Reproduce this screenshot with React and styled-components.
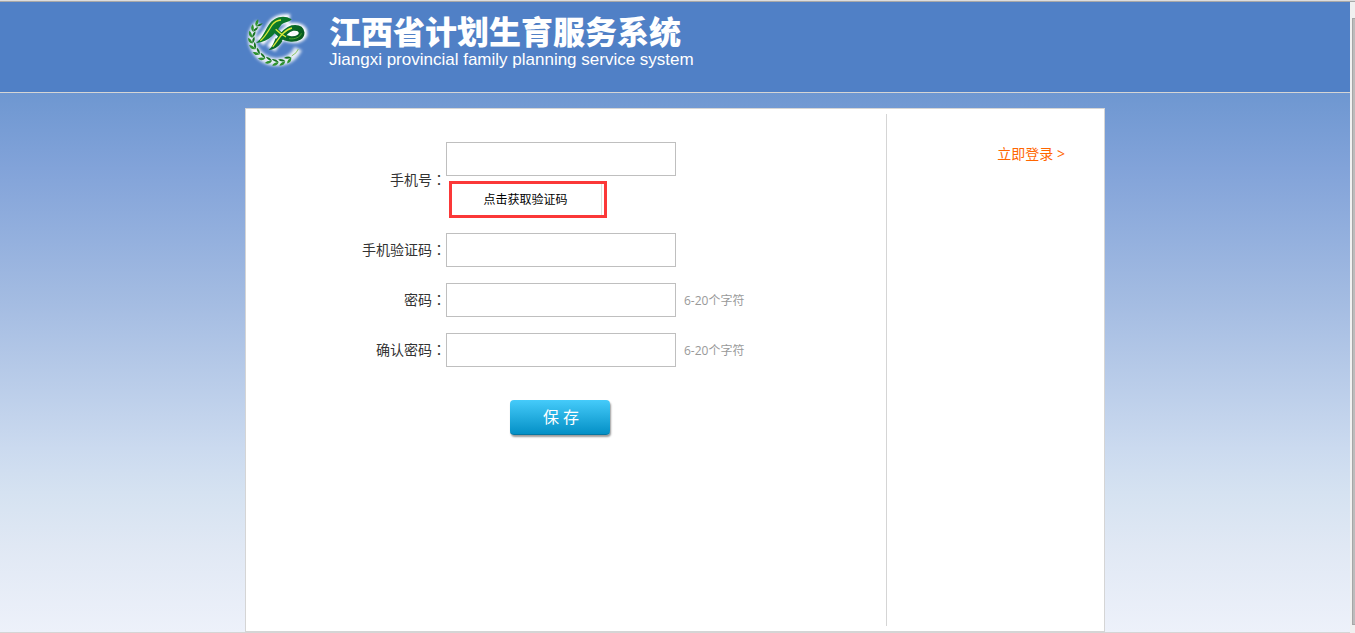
import React, { useState } from 'react';
import styled, { createGlobalStyle } from 'styled-components';

const GlobalStyle = createGlobalStyle`
  body {
    margin: 0;
    font-family: 'Open Sans', 'Noto Sans CJK SC', sans-serif;
    font-size: 14px;
    color: #333;
  }
  * {
    box-sizing: border-box;
  }
`;

const Window = styled.div`
  display: flex;
  min-height: 100vh;
  border-top: 1px solid #dcdcdc;
  background: #f0f0f0;
`;

const Page = styled.div`
  flex: 1;
  display: flex;
  flex-direction: column;
  border-top: 1px solid #a8a8a8;
  border-bottom: 1px solid #d5d5d5;
`;

const ScrollTrack = styled.div`
  width: 5px;
  padding: 16px 0 8px 2px;
  border-top: 1px solid #a8a8a8;
`;

const ScrollThumb = styled.div`
  height: 100%;
  background: #bcbcbc;
  border: 1px solid #a6a6a6;
  border-right: none;
`;

const Header = styled.header`
  height: 91px;
  background: #5080c6;
  border-bottom: 1px solid #d5d5d5;
`;

const Brand = styled.div`
  display: flex;
  max-width: 860px;
  margin: 0 auto;
  padding-top: 8px;
`;

const LogoSvg = styled.svg`
  width: 66px;
  height: 60px;
  margin-right: 18px;
  overflow: visible;
`;

const Title = styled.h1`
  margin: 0;
  font-family: 'Noto Sans CJK SC', sans-serif;
  font-size: 32px;
  line-height: 40px;
  font-weight: 900;
  color: #fff;
`;

const Subtitle = styled.p`
  margin: 0;
  font-family: 'Liberation Sans', sans-serif;
  font-size: 17px;
  line-height: 20px;
  color: #fff;
`;

const Content = styled.main`
  flex: 1;
  display: flex;
  justify-content: center;
  padding-top: 15px;
  background: linear-gradient(
    #6e97d1 0%,
    #82a3d9 14%,
    #a4bce2 39%,
    #cbdaef 66%,
    #d5e2f1 74%,
    #e0e8f4 84%,
    #edf1fa 100%
  );
`;

const Card = styled.div`
  display: flex;
  width: 100%;
  max-width: 860px;
  padding: 5px 0;
  background: #fff;
  border: 1px solid #d5d5d5;
`;

const Form = styled.form`
  flex: 1;
  padding-top: 28px;
`;

const Aside = styled.aside`
  width: 218px;
  padding: 30px 39px;
  border-left: 1px solid #d5d5d5;
  text-align: right;
`;

const LoginLink = styled.a`
  line-height: 20px;
  color: #ff6600;
  text-decoration: none;
`;

const Row = styled.div`
  display: flex;
  align-items: center;
  margin-bottom: ${(props) => props.$gap}px;
`;

const Label = styled.label`
  width: 200px;
  padding-bottom: 2px;
  text-align: right;
`;

// the TC face keeps the full-width colon in the middle of its box
const Colon = styled.span`
  font-family: 'Noto Sans CJK TC', sans-serif;
`;

const Input = styled.input`
  display: block;
  width: 230px;
  height: 34px;
  padding: 0 8px;
  border: 1px solid #bfbfbf;
  background: #fff;
  font-size: 14px;
`;

const Hint = styled.span`
  margin-left: 8px;
  font-size: 12px;
  color: #999;
`;

const CodeFrame = styled.div`
  width: 158px;
  height: 37px;
  margin: 5px 0 0 3px;
  border: 3px solid #fb3838;
`;

const CodeButton = styled.button`
  width: 150px;
  height: 31px;
  padding: 0 2px 2px 0;
  background: #fff;
  border: none;
  border-right: 1px solid #dde3dc;
  font-family: inherit;
  font-size: 12px;
  color: #000;
`;

const SaveButton = styled.button`
  display: block;
  width: 100px;
  height: 35px;
  margin: 33px 0 0 264px;
  padding: 0 0 2px 2px;
  border: none;
  border-bottom: 1px solid #0577a3;
  border-radius: 4px;
  background: linear-gradient(#45cbfa, #0490c6);
  box-shadow: 1px 2px 2px rgba(0, 0, 0, 0.4);
  font-family: inherit;
  font-size: 16px;
  color: #fff;
`;

// x, y and direction (degrees) of each leaf pair in the wreath
const leaves = [
  [70, 72, -48],
  [58, 86, -65],
  [52, 103, -85],
  [51, 121, -100],
  [56, 139, -120],
  [67, 156, -138],
  [82, 171, -155],
  [101, 181, -170],
  [121, 186, 178],
  [141, 185, 168],
  [160, 177, 150],
];

function Logo() {
  return (
    <LogoSvg viewBox="30 30 198 180" aria-hidden="true">
      <defs>
        <filter id="glow" x="-20%" y="-20%" width="140%" height="140%">
          <feGaussianBlur stdDeviation="5" />
        </filter>
        <linearGradient id="ribbon" gradientUnits="userSpaceOnUse" x1="70" y1="60" x2="190" y2="140">
          <stop offset="0" stopColor="#178428" />
          <stop offset="0.5" stopColor="#08742b" />
          <stop offset="1" stopColor="#07561f" />
        </linearGradient>
      </defs>
      <g filter="url(#glow)" fill="none" stroke="#fff">
        <path d="M72 70 Q40 100 56 140 Q76 182 122 186 Q168 188 190 146" strokeWidth="24" opacity="0.85" />
        <path
          d="M74 126 Q100 100 112 76 Q130 54 164 58 M108 146 Q134 106 168 84 Q204 80 202 102 Q190 124 142 106"
          strokeWidth="30"
        />
      </g>
      {leaves.map(([x, y, angle]) => (
        <g key={`${x}-${y}`} transform={`translate(${x} ${y}) rotate(${angle})`}>
          <path d="M-10 0 Q-5 -14 10 -10 Q4 0 -10 0Z" fill="#2f9230" />
          <path d="M-10 0 Q-3 10 10 9 Q4 -1 -10 0Z" fill="#167220" />
        </g>
      ))}
      <path d="M170 168 Q186 159 190 147" fill="none" stroke="#8cc465" strokeWidth="3" />
      <path
        d="M63 129 C80 117 88 96 101 75 C115 53 144 42 170 58 C163 68 149 65 139 74 C124 95 104 126 63 129Z"
        fill="url(#ribbon)"
      />
      <path
        d="M110 76 C124 98 146 116 168 117 C188 118 200 109 200 98 C198 85 186 82 172 84 C154 89 143 103 131 121"
        fill="none"
        stroke="url(#ribbon)"
        strokeWidth="17"
      />
      <path d="M122 115 C117 127 112 141 101 150 C121 149 134 137 142 123Z" fill="#08692a" />
      <path
        d="M76 122 C92 110 101 90 112 74 C119 65 128 61 138 60"
        fill="none"
        stroke="#d8ea38"
        strokeWidth="4"
      />
      <path
        d="M122 88 C132 98 143 106 153 111 M113 140 C124 129 132 112 143 101 C153 91 162 86 171 84"
        fill="none"
        stroke="#d8ea38"
        strokeWidth="4"
      />
      <path d="M162 116 C180 119 196 111 199 100" fill="none" stroke="#4aa82c" strokeWidth="3" />
    </LogoSvg>
  );
}

/**
 * One labelled text box, with an optional hint after it
 */
function Field({ id, label, type = 'text', value, onChange, hint, gap = 16, children }) {
  return (
    <Row $gap={gap}>
      <Label htmlFor={id}>
        {label}
        <Colon>：</Colon>
      </Label>
      <div>
        <Input id={id} type={type} value={value} onChange={(e) => onChange(e.target.value)} />
        {children}
      </div>
      {hint && <Hint>{hint}</Hint>}
    </Row>
  );
}

export default function App() {
  const [phone, setPhone] = useState('');
  const [code, setCode] = useState('');
  const [password, setPassword] = useState('');
  const [confirm, setConfirm] = useState('');

  return (
    <>
      <GlobalStyle />
      <Window>
        <Page>
          <Header>
            <Brand>
              <Logo />
              <div>
                <Title>江西省计划生育服务系统</Title>
                <Subtitle>Jiangxi provincial family planning service system</Subtitle>
              </div>
            </Brand>
          </Header>
          <Content>
            <Card>
              <Form onSubmit={(e) => e.preventDefault()}>
                <Field id="phone" label="手机号" value={phone} onChange={setPhone} gap={15}>
                  <CodeFrame>
                    <CodeButton type="button">点击获取验证码</CodeButton>
                  </CodeFrame>
                </Field>
                <Field id="code" label="手机验证码" value={code} onChange={setCode} />
                <Field
                  id="password"
                  label="密码"
                  type="password"
                  value={password}
                  onChange={setPassword}
                  hint="6-20个字符"
                />
                <Field
                  id="confirm"
                  label="确认密码"
                  type="password"
                  value={confirm}
                  onChange={setConfirm}
                  hint="6-20个字符"
                />
                <SaveButton type="submit">保 存</SaveButton>
              </Form>
              <Aside>
                <LoginLink href="#login">立即登录 &gt;</LoginLink>
              </Aside>
            </Card>
          </Content>
        </Page>
        <ScrollTrack>
          <ScrollThumb />
        </ScrollTrack>
      </Window>
    </>
  );
}
